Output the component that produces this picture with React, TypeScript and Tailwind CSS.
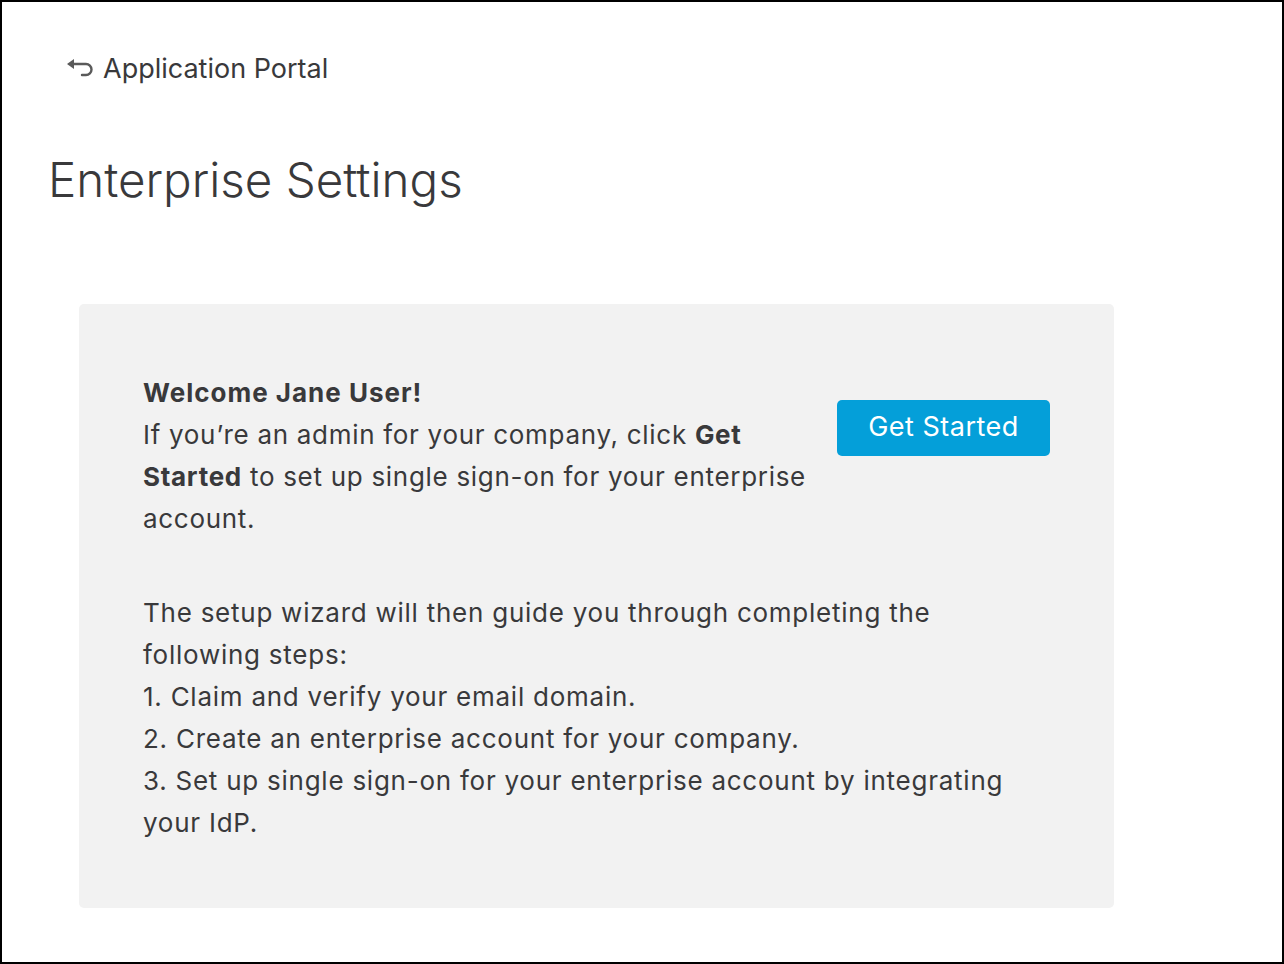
import React from "react";

export default function App() {
  return (
    <div className="w-[1284px] h-[964px] bg-white border-2 border-black box-border text-[#39393b] font-['Inter',sans-serif] overflow-hidden">
      <div className="flex items-center gap-[9px] pl-[62px] pt-[49px] h-[84px]">
        <svg width="30" height="24" viewBox="0 0 30 24" className="text-[#5a5a5a]">
          <path d="M3 7 L10 2 L10 12 Z" fill="currentColor" />
          <path d="M9 7 H22 a5.5 5.5 0 0 1 0 11 H18" fill="none" stroke="currentColor" strokeWidth="2.4" strokeLinecap="round" />
        </svg>
        <span className="text-[27px] leading-none">Application Portal</span>
      </div>
      <h1 className="pl-[46px] mt-[70px] text-[47.5px] leading-none font-light">Enterprise Settings</h1>
      <div className="ml-[77px] mt-[100px] w-[1035px] h-[604px] bg-[#f2f2f2] rounded-[5px] pl-[64px] pr-[40px] pt-[68px]">
        <div className="flex items-start">
          <div className="w-[680px] text-[26px] leading-[42px] tracking-[0.7px]">
            <div className="font-bold tracking-[1px]">Welcome Jane User!</div>
            <div>
              If you’re an admin for your company, click <span className="font-bold">Get Started</span> to set up single sign-on for your enterprise account.
            </div>
          </div>
          <button className="ml-[14px] mt-[28px] w-[213px] h-[56px] bg-[#049fd9] text-white rounded-[5px] text-[27px] tracking-[0.5px]">Get Started</button>
        </div>
        <div className="mt-[52px] w-[880px] text-[26px] leading-[42px] tracking-[0.75px]">
          <div>The setup wizard will then guide you through completing the following steps:</div>
          <div>1. Claim and verify your email domain.</div>
          <div>2. Create an enterprise account for your company.</div>
          <div>3. Set up single sign-on for your enterprise account by integrating your IdP.</div>
        </div>
      </div>
    </div>
  );
}
